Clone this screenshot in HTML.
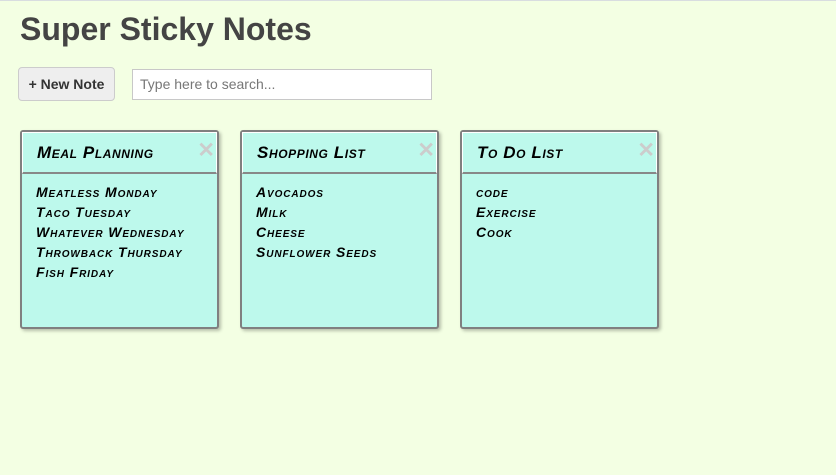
<!DOCTYPE html>
<html><head><meta charset="utf-8"><style>
html,body{margin:0;padding:0}
body{width:836px;height:475px;background:#f3ffe3;border-top:1px solid #d8dde0;box-sizing:border-box;position:relative;overflow:hidden;font-family:"Liberation Sans",sans-serif}
h1{position:absolute;left:20px;top:10px;margin:0;font-size:32px;font-weight:bold;color:#444;}
.btn{position:absolute;left:18px;top:66px;width:97px;height:34px;box-sizing:border-box;border:1px solid #ccc;border-radius:4px;background:#eee;font-size:14px;font-weight:bold;color:#333;text-align:center;line-height:32px}
.search{position:absolute;left:132px;top:68px;width:300px;height:31px;box-sizing:border-box;border:1px solid #c8c8c8;background:#fff;font-size:14px;color:#777;padding-left:7px;line-height:29px}
.note{position:absolute;top:129px;width:199px;height:199px;box-sizing:border-box;border:2px solid #808080;border-radius:3px;background:#bdf9ec;box-shadow:2px 2px 3px rgba(0,0,0,.25)}
.note .t{height:42px;border-bottom:2px solid #888;border-top:1px solid #fff;border-left:1px solid #fff;border-right:1px solid #fff;box-sizing:border-box;position:relative}
.hw{font-family:"Liberation Sans",sans-serif;font-weight:bold;font-style:italic;font-variant:small-caps;color:#000}
.t span{position:absolute;left:14px;top:10px;font-size:17px;letter-spacing:.6px}
.x{position:absolute;right:1px;top:5px;color:#ccc;font-size:21px;font-weight:bold;font-family:"Liberation Sans",sans-serif}
.items{padding:8px 0 0 14px;font-size:14px;line-height:20px;letter-spacing:.9px}
</style></head><body>
<h1>Super Sticky Notes</h1>
<div class="btn">+ New Note</div>
<div class="search">Type here to search...</div>
<div class="note" style="left:20px"><div class="t"><span class="hw">Meal Planning</span><div class="x">✕</div></div>
<div class="items hw">Meatless Monday<br>Taco Tuesday<br>Whatever Wednesday<br>Throwback Thursday<br>Fish Friday</div></div>
<div class="note" style="left:240px"><div class="t"><span class="hw">Shopping List</span><div class="x">✕</div></div>
<div class="items hw">Avocados<br>Milk<br>Cheese<br>Sunflower Seeds</div></div>
<div class="note" style="left:460px"><div class="t"><span class="hw">To Do List</span><div class="x">✕</div></div>
<div class="items hw">code<br>Exercise<br>Cook</div></div>
</body></html>
